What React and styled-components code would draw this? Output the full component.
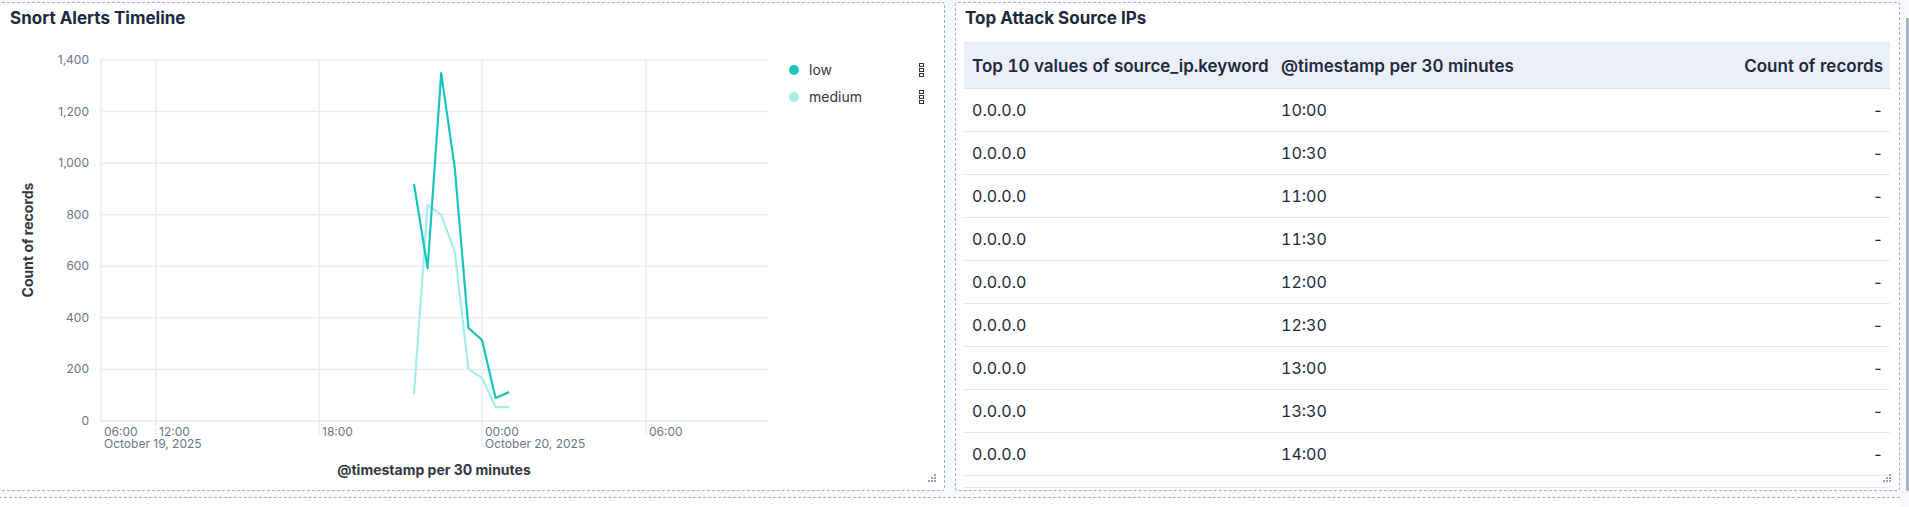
import styled, { createGlobalStyle } from "styled-components";

const GlobalStyle = createGlobalStyle`
  html, body {
    margin: 0;
    padding: 0;
  }
  body {
    background: #f6f8fc;
    font-family: Inter, "Noto Sans", sans-serif;
    color: #1d2a3e;
    height: 507px;
    overflow: hidden;
  }
`;

const LOW = [919, 593, 1349, 981, 361, 314, 89, 112];
const MEDIUM = [105, 838, 799, 655, 201, 167, 54, 54];
const ROWS = ["10:00", "10:30", "11:00", "11:30", "12:00", "12:30", "13:00", "13:30", "14:00"];

const PLOT = { left: 101, right: 768, top: 60, bottom: 421 };
const yOf = (v) => PLOT.bottom - (v * (PLOT.bottom - PLOT.top)) / 1400;
const xOf = (i) => 414 + i * 13.6;
const toPoints = (arr) => arr.map((v, i) => `${xOf(i)},${yOf(v)}`).join(" ");

const X_TICKS = [
  { x: 156, time: "12:00" },
  { x: 319, time: "18:00" },
  { x: 482, time: "00:00", date: "October 20, 2025" },
  { x: 646, time: "06:00" },
];

function Chart() {
  return (
    <ChartSvg width="780" height="454" viewBox="0 0 780 454">
      <g transform="translate(0,-36)">
        {[0, 200, 400, 600, 800, 1000, 1200, 1400].map((v) => (
          <g key={v}>
            <line x1={PLOT.left} x2={PLOT.right} y1={yOf(v)} y2={yOf(v)} stroke="#e8ebf3" strokeWidth="1.5" />
            <AxisText x="89" y={yOf(v) + 4} textAnchor="end">
              {v.toLocaleString("en-US")}
            </AxisText>
          </g>
        ))}
        <line x1={PLOT.left} x2={PLOT.left} y1={PLOT.top} y2={PLOT.bottom} stroke="#e8ebf3" strokeWidth="1.5" />
        {X_TICKS.map((t) => (
          <g key={t.x}>
            <line
              x1={t.x}
              x2={t.x}
              y1={PLOT.top}
              y2={t.date ? 447 : 435}
              stroke="#e8ebf3"
              strokeWidth="1.5"
            />
            <AxisText x={t.x + 3} y="436">{t.time}</AxisText>
            {t.date && <AxisText x={t.x + 3} y="448">{t.date}</AxisText>}
          </g>
        ))}
        <AxisText x="104" y="436">06:00</AxisText>
        <AxisText x="104" y="448">October 19, 2025</AxisText>

        <polyline points={toPoints(MEDIUM)} fill="none" stroke="#a6edea" strokeWidth="2.2" strokeLinejoin="round" />
        <polyline points={toPoints(LOW)} fill="none" stroke="#16c5c0" strokeWidth="2.2" strokeLinejoin="round" />

        <AxisTitle x="434" y="475" textAnchor="middle">@timestamp per 30 minutes</AxisTitle>
        <AxisTitle x="0" y="0" textAnchor="middle" transform="translate(33,240) rotate(-90)">
          Count of records
        </AxisTitle>
      </g>
    </ChartSvg>
  );
}

function BoxesIcon() {
  return (
    <svg width="6" height="14" viewBox="0 0 6 14">
      {[0.5, 5.5, 10.5].map((y) => (
        <rect key={y} x="0.5" y={y} width="4" height="3" fill="none" stroke="#343741" strokeWidth="1" />
      ))}
    </svg>
  );
}

function ResizeHandle() {
  return (
    <Handle width="9" height="9" viewBox="0 0 9 9">
      {[
        [6, 0],
        [6, 3],
        [3, 3],
        [6, 6],
        [3, 6],
        [0, 6],
      ].map(([x, y]) => (
        <rect key={`${x}-${y}`} x={x} y={y} width="2" height="2" fill="#98a2b3" />
      ))}
    </Handle>
  );
}

export default function App() {
  return (
    <>
      <GlobalStyle />
      <Page>
        <Dashboard>
          <PanelRow>
            <Panel>
              <PanelTitle>Snort Alerts Timeline</PanelTitle>
              <ChartBody>
                <Chart />
                <Legend>
                  <LegendItem>
                    <Dot $color="#16c5c0" />
                    <LegendLabel>low</LegendLabel>
                    <BoxesIcon />
                  </LegendItem>
                  <LegendItem>
                    <Dot $color="#a6edea" />
                    <LegendLabel>medium</LegendLabel>
                    <BoxesIcon />
                  </LegendItem>
                </Legend>
              </ChartBody>
              <ResizeHandle />
            </Panel>
            <Panel>
              <PanelTitle $pad={9} $height={39}>Top Attack Source IPs</PanelTitle>
              <TableWrap>
                <Table>
                  <colgroup>
                    <col style={{ width: 309 }} />
                    <col style={{ width: 340 }} />
                    <col />
                  </colgroup>
                  <thead>
                    <tr>
                      <HeadCell>Top 10 values of source_ip.keyword</HeadCell>
                      <HeadCell>@timestamp per 30 minutes</HeadCell>
                      <HeadCell $align="right">Count of records</HeadCell>
                    </tr>
                  </thead>
                  <tbody>
                    {ROWS.map((time) => (
                      <Row key={time}>
                        <Cell>0.0.0.0</Cell>
                        <Cell>{time}</Cell>
                        <Cell $align="right">-</Cell>
                      </Row>
                    ))}
                  </tbody>
                </Table>
              </TableWrap>
              <ResizeHandle />
            </Panel>
          </PanelRow>
          <NextPanel />
        </Dashboard>
        <ScrollTrack>
          <ScrollThumb />
        </ScrollTrack>
      </Page>
    </>
  );
}

const Page = styled.div`
  display: flex;
  width: 1909px;
  height: 507px;
`;

const Dashboard = styled.div`
  flex: 1;
  margin-left: -1px;
  padding-top: 2px;
  display: flex;
  flex-direction: column;
  gap: 6px;
`;

const PanelRow = styled.div`
  display: grid;
  grid-template-columns: 946px 945px;
  gap: 10px;
  height: 497px;
`;

const Panel = styled.section`
  position: relative;
  background: #fff;
  border: 1px dashed #a2afc6;
  border-radius: 3px;
  display: flex;
  flex-direction: column;
  overflow: hidden;
`;

const NextPanel = styled.div`
  height: 10px;
  background: #fff;
  border-top: 1px dashed #a2afc6;
  margin-right: 1px;
`;

const PanelTitle = styled.h2`
  margin: 0;
  height: ${(p) => p.$height || 33}px;
  padding: 5px 0 0 ${(p) => p.$pad || 10}px;
  box-sizing: border-box;
  font-size: 17px;
  line-height: 20px;
  font-weight: 700;
  color: #1d2a3e;
`;

const ChartBody = styled.div`
  display: flex;
  flex: 1;
`;

const ChartSvg = styled.svg`
  display: block;
  flex-shrink: 0;
`;

const AxisText = styled.text`
  font-family: Inter, "Noto Sans", sans-serif;
  font-size: 12px;
  fill: #69768c;
`;

const AxisTitle = styled.text`
  font-family: Inter, "Noto Sans", sans-serif;
  font-size: 14px;
  font-weight: 700;
  fill: #343741;
`;

const Legend = styled.div`
  display: flex;
  flex-direction: column;
  padding-top: 20px;
  margin-left: 9px;
  width: 136px;
`;

const LegendItem = styled.div`
  display: flex;
  align-items: center;
  height: 27px;
`;

const Dot = styled.span`
  width: 10px;
  height: 10px;
  border-radius: 50%;
  background: ${(p) => p.$color};
  margin-right: 10px;
  flex-shrink: 0;
`;

const LegendLabel = styled.span`
  flex: 1;
  font-size: 14px;
  color: #343741;
`;

const Handle = styled.svg`
  position: absolute;
  right: 7px;
  bottom: 7px;
`;

const TableWrap = styled.div`
  margin: 0 9px 0 8px;
  height: 445px;
  overflow: hidden;
  border-bottom: 1px solid #e3e8f2;
`;

const Table = styled.table`
  width: 100%;
  border-collapse: collapse;
  table-layout: fixed;
  font-feature-settings: "tnum" 1;
`;

const HeadCell = styled.th`
  height: 45px;
  padding: 0 7px 0 8px;
  background: #ebeff7;
  border-top: 1px solid #e3e8f2;
  border-bottom: 1px solid #dde3ee;
  font-size: 17px;
  font-weight: 600;
  color: #1d2a3e;
  text-align: ${(p) => p.$align || "left"};
  white-space: nowrap;
`;

const Row = styled.tr`
  border-bottom: 1px solid #e3e8f2;
`;

const Cell = styled.td`
  height: 42px;
  padding: 0 7px 0 8px;
  font-size: 16px;
  color: #1d2a3e;
  text-align: ${(p) => p.$align || "left"};
`;

const ScrollTrack = styled.div`
  width: 8px;
  padding: 18px 0 16px 5px;
  box-sizing: border-box;
  display: flex;
`;

const ScrollThumb = styled.div`
  flex: 1;
  background: #a8b2c2;
`;
